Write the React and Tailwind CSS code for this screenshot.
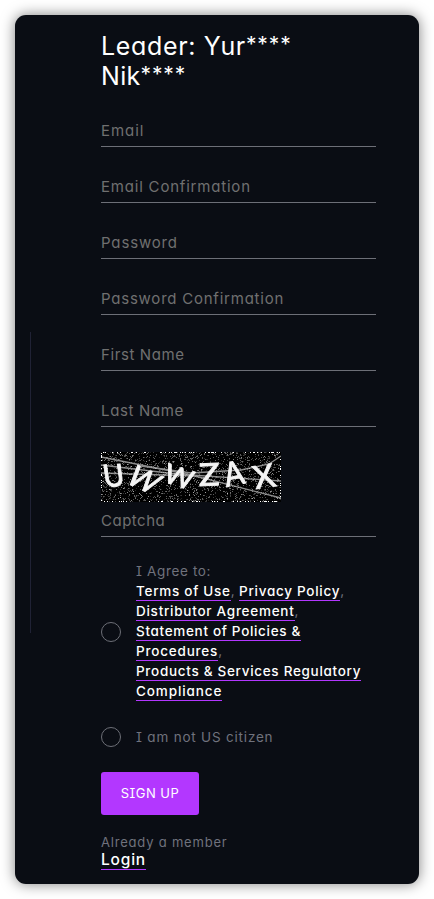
import React from "react";

const fields = [
  { label: "Email", track: "tracking-[0.95px]" },
  { label: "Email Confirmation", track: "tracking-[0.8px]" },
  { label: "Password", track: "tracking-[0.85px]" },
  { label: "Password Confirmation", track: "tracking-[0.77px]" },
  { label: "First Name", track: "tracking-[0.6px]" },
  { label: "Last Name", track: "tracking-[0.65px]" },
];

function Field({ label, track }) {
  return (
    <label className="flex h-10 w-[275px] items-center border-b border-[#6d6f77] pt-2.5 text-[15px] text-[#707070]">
      <span className={track}>{label}</span>
    </label>
  );
}

// Deterministic speckle so that the captcha looks the same on every render.
function speckles(count, seed) {
  let s = seed;
  const next = () => {
    s = (s + 0x6d2b79f5) | 0;
    let t = Math.imul(s ^ (s >>> 15), 1 | s);
    t = (t + Math.imul(t ^ (t >>> 7), 61 | t)) ^ t;
    return ((t ^ (t >>> 14)) >>> 0) / 4294967296;
  };
  return Array.from({ length: count }, () => ({
    x: Math.floor(next() * 180),
    y: Math.floor(next() * 50),
    o: 0.12 + next() * 0.33,
    edge: next(),
  }));
}

const noise = speckles(1900, 77);
const border = speckles(120, 1234);

const letters = [
  { c: "U", m: "matrix(0.95 -0.05 0.14 1.02 3.5 35)" },
  { c: "W", m: "matrix(0.88 0.4 -0.62 0.8 23 30)" },
  { c: "W", m: "matrix(0.9 0.3 -0.28 0.84 61 29)" },
  { c: "Z", m: "matrix(1.15 -0.05 0.02 1.03 98 34)" },
  { c: "A", m: "matrix(0.96 -0.2 0.23 1.08 125.5 35)" },
  { c: "X", m: "matrix(1.08 -0.16 0.23 1.04 155 37)" },
];

function Captcha() {
  return (
    <svg className="block h-[50px] w-[180px]" viewBox="0 0 180 50" role="img" aria-label="Captcha">
      <rect width="180" height="50" fill="#000" />
      {noise.map((p, i) => (
        <rect key={i} x={p.x} y={p.y} width="1" height="1" fill="#fff" opacity={p.o} />
      ))}
      <g stroke="#d8d8d8" strokeWidth="1.3" fill="none" opacity=".65">
        <path d="M0 5L90 23L180 46" />
        <path d="M0 13L75 22L180 29" />
        <path d="M0 21L95 24" />
        <path d="M40 14L90 21L140 18L168 12L180 4" />
      </g>
      <g
        className="blur-[0.4px]"
        fill="#f4f4f4"
        stroke="#f4f4f4"
        strokeWidth=".9"
        fontFamily="Lato, sans-serif"
        fontSize="30"
      >
        {letters.map((l, i) => (
          <text key={i} transform={l.m}>{l.c}</text>
        ))}
      </g>
      {border.map((p, i) => {
        const horizontal = p.edge < 0.78;
        return (
          <rect
            key={i}
            x={horizontal ? p.x : p.x % 2 ? 0 : 179}
            y={horizontal ? (p.y % 2 ? 0 : 49) : p.y}
            width="1"
            height="1"
            fill="#fff"
          />
        );
      })}
    </svg>
  );
}

function Link({ children, track = "tracking-[0.72px]" }) {
  return (
    <a className={`inline-block h-5 border-b border-[#b337ff] align-top font-medium text-white ${track}`}>
      {children}
    </a>
  );
}

function Radio({ className = "" }) {
  return <span className={`size-5 shrink-0 rounded-full border border-[#6d6f77] ${className}`} />;
}

function Masked() {
  return <span className="align-[3px] text-[21px] leading-none tracking-[0.9px]">****</span>;
}

export default function App() {
  return (
    <div className="h-[899px] w-[434px] overflow-hidden bg-white p-[15px] font-['Inter','Liberation_Sans',sans-serif] [font-feature-settings:'cv11','cv08']">
      <main className="flex h-[869px] w-[404px] items-start rounded-[11px] bg-[#0a0d14] pl-[15px] shadow-[0_0_14px_rgba(0,0,0,0.5)]">
        <div className="mt-[317px] h-[301px] w-px bg-[#202235]" />
        <form className="ml-[70px] w-[275px] pt-4 whitespace-nowrap">
          <h1 className="text-[25px] leading-[30px] text-white">
            <span className="block h-[30px] tracking-[0.65px]">Leader: Yur<Masked /></span>
            <span className="block h-[30px] tracking-[0.3px]">Nik<Masked /></span>
          </h1>
          <div className="mt-[16px] flex flex-col gap-4">
            {fields.map((f) => (
              <Field key={f.label} {...f} />
            ))}
          </div>
          <div className="mt-[25px]">
            <Captcha />
          </div>
          <label className="flex h-[35px] items-center border-b border-[#6d6f77] pt-[5px] text-[15px] text-[#707070]">
            <span className="tracking-[0.5px]">Captcha</span>
          </label>
          <div className="mt-6 flex items-center gap-[15px]">
            <Radio className="mt-0.5" />
            <div className="text-[13.5px] leading-5 text-[#70727d]">
              <div className="tracking-[0.65px]">I Agree to:</div>
              <div><Link>Terms of Use</Link>,<span className="inline-block w-[4.5px]" /><Link>Privacy Policy</Link>,</div>
              <div><Link track="tracking-[0.74px]">Distributor Agreement</Link>,</div>
              <div><Link track="tracking-[0.68px]">Statement of Policies &amp;</Link></div>
              <div><Link track="tracking-[0.8px]">Procedures</Link>,</div>
              <div><Link track="tracking-[0.7px]">Products &amp; Services Regulatory</Link></div>
              <div><Link track="tracking-[0.9px]">Compliance</Link></div>
            </div>
          </div>
          <div className="mt-[26px] flex h-5 items-center gap-[15px] text-[13.5px] leading-5 text-[#70727d]">
            <Radio />
            <span className="pb-px tracking-[0.8px]">I am not US citizen</span>
          </div>
          <button type="button" className="mt-[25px] flex h-[43px] w-[98px] items-center justify-center rounded-[3px] bg-[#b337ff] text-[13px] tracking-[0.5px] text-white">
            SIGN UP
          </button>
          <div className="mt-[19px] h-[17px] text-[13px] leading-4 text-[#70727d]">
            <span className="tracking-[0.8px]">Already a member</span>
          </div>
          <a className="inline-block h-[19px] border-b border-[#b337ff] align-top text-[15.5px] leading-[18px] font-medium tracking-[0.8px] text-white">
            Login
          </a>
        </form>
      </main>
    </div>
  );
}
